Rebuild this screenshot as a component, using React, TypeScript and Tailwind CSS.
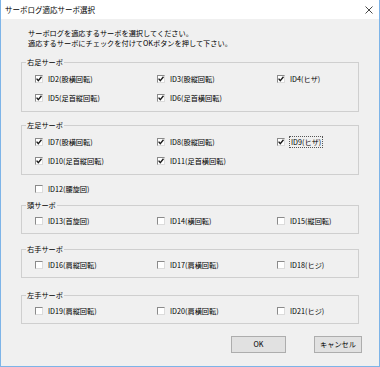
import React from "react";

type Servo = { label: string; checked: boolean; focus?: boolean };

const font = { fontFamily: '"Noto Sans CJK JP", "Noto Sans", sans-serif' };

function Box({ checked }: { checked: boolean }) {
  return (
    <span className="w-[8px] h-[8px] shrink-0 flex items-center justify-center bg-white border border-t-[#8a8a8a] border-l-[#8a8a8a] border-r-[#dcdcdc] border-b-[#dcdcdc]">
      {checked && (
        <svg width="6" height="6" viewBox="0 0 6 6">
          <path d="M0.6 2.6 L2.3 4.6 L5.5 0.8" stroke="#1a1a1a" strokeWidth="1.4" fill="none" />
        </svg>
      )}
    </span>
  );
}

function Item({ servo }: { servo: Servo }) {
  return (
    <div className="flex items-center gap-[5px] h-[19px]">
      <Box checked={servo.checked} />
      <span
        className={
          servo.focus
            ? "outline outline-1 outline-dotted outline-[#555] outline-offset-0 px-[1px] leading-[10px]"
            : "leading-[10px]"
        }
      >
        {servo.label}
      </span>
    </div>
  );
}

function Group({ title, items, className }: { title: string; items: Servo[]; className: string }) {
  return (
    <fieldset className={`border border-[#cfcfcf] ${className}`}>
      <legend className="ml-[4px] px-[1px] leading-[10px]">{title}</legend>
      <div className="grid grid-cols-[122px_120px_1fr] pl-[13px]">
        {items.map((s) => (
          <Item key={s.label} servo={s} />
        ))}
      </div>
    </fieldset>
  );
}

export default function App() {
  return (
    <div
      className="w-[380px] h-[367px] flex flex-col border-l border-r border-b border-[#7db4e8] text-black text-[7.2px]"
      style={font}
    >
      {/* Title bar */}
      <div className="h-[19px] shrink-0 bg-white flex items-center justify-between pl-[4px] pr-[6px]">
        <span className="text-[7.5px]">サーボログ適応サーボ選択</span>
        <svg width="8" height="8" viewBox="0 0 8 8">
          <path d="M0.5 0.5 L7.5 7.5 M7.5 0.5 L0.5 7.5" stroke="#333" strokeWidth="0.9" />
        </svg>
      </div>

      {/* Body */}
      <div className="flex-1 bg-[#f0f0f0] pl-[20px] pr-[20px] flex flex-col">
        <div className="pt-[9px] pl-[7px] leading-[10px]">
          <p>サーボログを適応するサーボを選択してください。</p>
          <p>適応するサーボにチェックを付けてOKボタンを押して下さい。</p>
        </div>

        <Group
          title="右足サーボ"
          className="mt-[9px] pt-[2px] pb-[4px]"
          items={[
            { label: "ID2(股横回転)", checked: true },
            { label: "ID3(股縦回転)", checked: true },
            { label: "ID4(ヒザ)", checked: true },
            { label: "ID5(足首縦回転)", checked: true },
            { label: "ID6(足首横回転)", checked: true },
          ]}
        />

        <Group
          title="左足サーボ"
          className="mt-[8px] pt-[2px] pb-[4px]"
          items={[
            { label: "ID7(股横回転)", checked: true },
            { label: "ID8(股縦回転)", checked: true },
            { label: "ID9(ヒザ)", checked: true, focus: true },
            { label: "ID10(足首縦回転)", checked: true },
            { label: "ID11(足首横回転)", checked: true },
          ]}
        />

        <div className="mt-[4px] pl-[14px]">
          <Item servo={{ label: "ID12(腰旋回)", checked: false }} />
        </div>

        <Group
          title="頭サーボ"
          className="mt-[2px] pt-[1px] pb-[3px]"
          items={[
            { label: "ID13(首旋回)", checked: false },
            { label: "ID14(横回転)", checked: false },
            { label: "ID15(縦回転)", checked: false },
          ]}
        />

        <Group
          title="右手サーボ"
          className="mt-[10px] pt-[1px] pb-[3px]"
          items={[
            { label: "ID16(肩縦回転)", checked: false },
            { label: "ID17(肩横回転)", checked: false },
            { label: "ID18(ヒジ)", checked: false },
          ]}
        />

        <Group
          title="左手サーボ"
          className="mt-[12px] pt-[1px] pb-[3px]"
          items={[
            { label: "ID19(肩縦回転)", checked: false },
            { label: "ID20(肩横回転)", checked: false },
            { label: "ID21(ヒジ)", checked: false },
          ]}
        />

        <div className="mt-[12px] -mr-[3px] flex justify-end gap-[28px]">
          <button className="w-[55px] h-[17px] bg-[#e1e1e1] border border-[#adadad] leading-none">
            OK
          </button>
          <button className="w-[48px] h-[17px] bg-[#e1e1e1] border border-[#adadad] leading-none">
            キャンセル
          </button>
        </div>
      </div>
    </div>
  );
}
